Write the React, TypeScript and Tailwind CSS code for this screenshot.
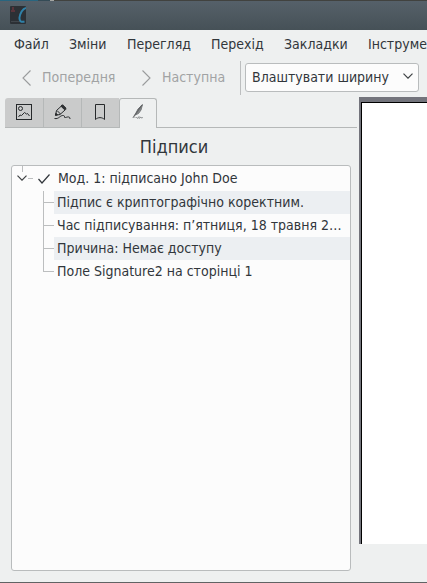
import React from "react";

const menus = [
  { label: "Файл", cls: "w-[55px]" },
  { label: "Зміни", cls: "w-[58px]" },
  { label: "Перегляд", cls: "w-[84px]" },
  { label: "Перехід", cls: "w-[73px]" },
  { label: "Закладки", cls: "w-[84px]" },
  { label: "Інструме", cls: "w-[59px]" },
];

const details = [
  "Підпис є криптографічно коректним.",
  "Час підписування: п’ятниця, 18 травня 2…",
  "Причина: Немає доступу",
  "Поле Signature2 на сторінці 1",
];

function AppIcon() {
  return (
    <svg width="16" height="18" viewBox="0 0 16 18" fill="none">
      <rect width="16" height="18" rx="1" fill="#2c3035" />
      <path d="M1 15.500h9" stroke="#41464b" />
      <path d="M2 1h2v3h1v2H1V4h1z" fill="#59343b" />
      <path d="M16 2C12.500 2.500 10 7.500 9.500 11.500c-.3 3.500 1.500 5 5 4" stroke="#2f81a8" strokeWidth="2" />
    </svg>
  );
}

function ImageIcon() {
  return (
    <svg width="16" height="16" viewBox="0 0 16 16" fill="none" stroke="#26292b">
      <rect x=".5" y=".5" width="15" height="15" />
      <circle cx="4.500" cy="4.500" r="2" />
      <path d="M2.500 13l1.500-2 1.500.5 3-3 2 1.500 1-.5 2 2.500" />
    </svg>
  );
}

function MarkerIcon() {
  return (
    <svg width="17" height="16" viewBox="0 0 17 16" fill="none" stroke="#26292b">
      <path d="M8 1.500L11.800 5.300 6 10.500l-4.500.8 1-4.800z" />
      <path d="M8.500.7l3.500 3.500-1.500 1.500L7 2.200z" fill="#303335" />
      <path d="M3 6.500l3.500 3.500" />
      <path d="M1.500 11.300l.5-2 1.500 1.500z" fill="#26292b" />
      <path d="M.5 14.500c4.500 1 5.500-3.500 9-3 2 .3 0 2.500 2 2 2-.5 4.500-1.500 4.500 1.500" />
    </svg>
  );
}

function BookmarkIcon() {
  return (
    <svg width="10" height="16" viewBox="0 0 10 16" fill="none" stroke="#26292b">
      <path d="M.5.500h9v15C7 13 3 13 .5 15.500z" />
    </svg>
  );
}

function SignatureIcon() {
  return (
    <svg width="12" height="16" viewBox="0 0 12 16" fill="none" stroke="#777a7c">
      <path d="M10.500.5L6 5l-3 6 3.500-1.500L9 6z" fill="#85888a" />
      <path d="M10 1L1.500 13" stroke="#606365" strokeWidth="1.200" />
      <path d="M.5 13.500h2M3.500 14l1-1 1 1.500 1.500-2v2l2-1.500v1l2-.5" strokeWidth=".7" />
    </svg>
  );
}

function Chevron({ dir }: { dir: "left" | "right" | "down" }) {
  if (dir === "down")
    return (
      <svg width="10" height="6" viewBox="0 0 10 6" fill="none" stroke="#3f4345" strokeWidth="1.200">
        <path d="M.5.700L5 5.200 9.500.700" />
      </svg>
    );
  return (
    <svg width="9" height="16" viewBox="0 0 9 16" fill="none" stroke="#999b9c" strokeWidth="1.100">
      <path d={dir === "left" ? "M8.500.5L1 8l7.500 7.500" : "M.5.500L8 8 .5 15.500"} />
    </svg>
  );
}

function Branch({ last }: { last: boolean }) {
  return (
    <div className="flex h-full w-[11px] shrink-0">
      <div className={`w-px bg-[#bcbebf] ${last ? "h-3" : "h-full"}`} />
      <div className="mt-[11px] h-px w-[10px] bg-[#bcbebf]" />
    </div>
  );
}

export default function App() {
  return (
    <div className="flex h-[583px] w-[427px] flex-col overflow-hidden border-b border-[#606364] bg-[#eef0f0] font-['DejaVu_Sans_Condensed','DejaVu_Sans',sans-serif] text-[14px] leading-[23px] whitespace-nowrap text-[#31363b] [font-stretch:condensed]">
      <header className="flex h-[30px] shrink-0 flex-col bg-linear-to-b from-[#56616a] to-[#465157]">
        <div className="flex h-px">
          <div className="w-[38px] bg-[#28657f]" />
          <div className="w-3 bg-[#344b56]" />
          <div className="w-1 bg-[#a4a5a2]" />
          <div className="flex-1 bg-[#41423f]" />
        </div>
        <div className="pt-[5px] pl-[10px]"><AppIcon /></div>
      </header>
      <nav className="flex h-[29px] shrink-0 items-center pl-[14px]">
        {menus.map((m) => <div key={m.label} className={`shrink-0 ${m.cls}`}>{m.label}</div>)}
      </nav>
      <div className="flex h-[38px] shrink-0 items-center pb-px text-[#a1a3a4]">
        <div className="flex w-[120px] items-center gap-[11px] pl-[22px]"><Chevron dir="left" />Попередня</div>
        <div className="flex w-[120px] items-center gap-[11px] pl-[22px]"><Chevron dir="right" />Наступна</div>
        <div className="h-[34px] w-px bg-[#bcbebf]" />
        <div className="ml-1 flex h-[29px] w-[174px] items-center justify-between rounded-[3px] border border-[#b9bcbd] bg-[#fcfcfc] pr-[5px] pl-[6px] text-[#31363b]">
          Влаштувати ширину<div className="pb-[3px]"><Chevron dir="down" /></div>
        </div>
      </div>
      <main className="flex min-h-0 flex-1">
        <aside className="flex w-[359px] flex-col">
          <div className="mt-px ml-[5px] flex h-[30px] w-[352px] shrink-0 text-[#26292b]">
            <div className="flex w-[39px] items-center justify-center rounded-tl-[3px] border-r border-b border-[#b5b8b8] bg-[#cacbcb] pb-px"><ImageIcon /></div>
            <div className="flex w-[38px] items-center justify-center border-r border-b border-[#b5b8b8] bg-[#cacbcb] pb-px"><MarkerIcon /></div>
            <div className="flex w-[37px] items-center border-b border-[#b5b8b8] bg-[#cacbcb] pb-px pl-[13px]"><BookmarkIcon /></div>
            <div className="flex w-[38px] items-center justify-center rounded-t-[3px] border-x border-t border-[#b5b8b8] pb-[3px]"><SignatureIcon /></div>
            <div className="flex-1 border-b border-[#b5b8b8]" />
          </div>
          <div className="h-[37px] shrink-0 pt-[7px] pr-[11px] text-center text-[18px]">Підписи</div>
          <section className="ml-[11px] h-[406px] w-[340px] shrink-0 rounded-[3px] border border-[#b9bcbd] bg-[#fcfcfc]">
            <div className="flex h-[25px] items-center">
              <div className="flex h-full w-[26px] items-center pl-[5px]">
                <div className="flex h-full w-[10px] flex-col items-center">
                  <div className="mb-[3px] h-[6px] w-px bg-[#bcbebf]" />
                  <Chevron dir="down" />
                </div>
                <div className="ml-px h-px w-[5px] bg-[#bcbebf]" />
              </div>
              <svg width="12" height="10" viewBox="0 0 12 10" fill="none" stroke="#31363b" strokeWidth="1.200"><path d="M.5 5l3.500 4L11.500.5" /></svg>
              <span className="ml-2">Мод. 1: підписано John Doe</span>
            </div>
            {details.map((text, i) => (
              <div key={text} className="flex h-[23px] pl-[31px]">
                <Branch last={i === details.length - 1} />
                <div className={`flex-1 pl-[3px] ${i % 2 ? "" : "bg-[#eceff2]"}`}>{text}</div>
              </div>
            ))}
          </section>
        </aside>
        <div className="h-[447px] flex-1 border-t-[5px] border-l-2 border-[#73747c]">
          <div className="h-full border-t border-l border-black bg-white" />
        </div>
      </main>
    </div>
  );
}
